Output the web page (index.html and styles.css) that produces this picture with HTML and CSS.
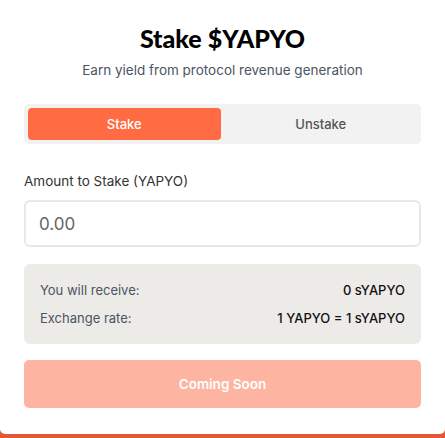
FILE: index.html
```html
<!DOCTYPE html>
<html>
<head>
<meta charset="utf-8">
<link rel="stylesheet" href="styles.css">
</head>
<body>
<div class="page">
  <div class="card">
    <h1 class="title">Stake $YAPYO</h1>
    <p class="subtitle">Earn yield from protocol revenue generation</p>
    <div class="tabs">
      <div class="tab tab-active">Stake</div>
      <div class="tab">Unstake</div>
    </div>
    <label class="label">Amount to Stake (YAPYO)</label>
    <div class="input">0.00</div>
    <div class="info">
      <div class="info-row"><span class="info-key">You will receive:</span><span class="info-val">0 sYAPYO</span></div>
      <div class="info-row"><span class="info-key">Exchange rate:</span><span class="info-val">1 YAPYO = 1 sYAPYO</span></div>
    </div>
    <div class="btn">Coming Soon</div>
  </div>
</div>
</body>
</html>
```
FILE: styles.css
```css
* { box-sizing: border-box; }
html, body { margin: 0; padding: 0; }
body {
  background: #e05a35;
  font-family: "Inter", "Noto Sans", sans-serif;
  width: 445px;
  height: 438px;
  overflow: hidden;
}
.page { height: 434px; }
.card {
  background: #ffffff;
  height: 434px;
  border-radius: 0 0 5px 5px;
  padding: 23px 24px 0 24px;
  display: flex;
  flex-direction: column;
}
.title {
  margin: 0;
  text-align: center;
  font-family: "Lato", sans-serif;
  font-weight: 900;
  font-size: 25px;
  line-height: 30px;
  color: #000;
}
.subtitle {
  margin: 8px 0 0 0;
  text-align: center;
  font-size: 13.5px;
  line-height: 18px;
  color: #4b5563;
}
.tabs {
  margin-top: 25px;
  height: 40px;
  background: #f2f2f2;
  border-radius: 5px;
  padding: 4px;
  display: flex;
  gap: 4px;
}
.tab {
  flex: 1;
  display: flex;
  align-items: center;
  justify-content: center;
  font-size: 13px;
  font-weight: 500;
  color: #555555;
  border-radius: 4px;
}
.tab-active {
  background: #ff6b42;
  color: #ffffff;
}
.label {
  margin-top: 28px;
  font-size: 13.5px;
  line-height: 18px;
  color: #333333;
}
.input {
  margin-top: 10px;
  height: 47px;
  border: 2px solid #e8e8e8;
  border-radius: 6px;
  padding: 0 13px;
  display: flex;
  align-items: center;
  font-size: 17px;
  color: #666666;
}
.info {
  margin-top: 17px;
  background: #ecebe8;
  border-radius: 6px;
  padding: 17px 16px 17px 16px;
  display: flex;
  flex-direction: column;
  gap: 10px;
}
.info-row {
  display: flex;
  justify-content: space-between;
  font-size: 13px;
  line-height: 18px;
}
.info-key { color: #4b5563; }
.info-val { color: #111111; font-weight: 500; }
.btn {
  margin-top: 16px;
  height: 48px;
  background: #fdb5a1;
  border-radius: 5px;
  display: flex;
  align-items: center;
  justify-content: center;
  color: #ffffff;
  font-weight: 600;
  font-size: 13.5px;
}
```
